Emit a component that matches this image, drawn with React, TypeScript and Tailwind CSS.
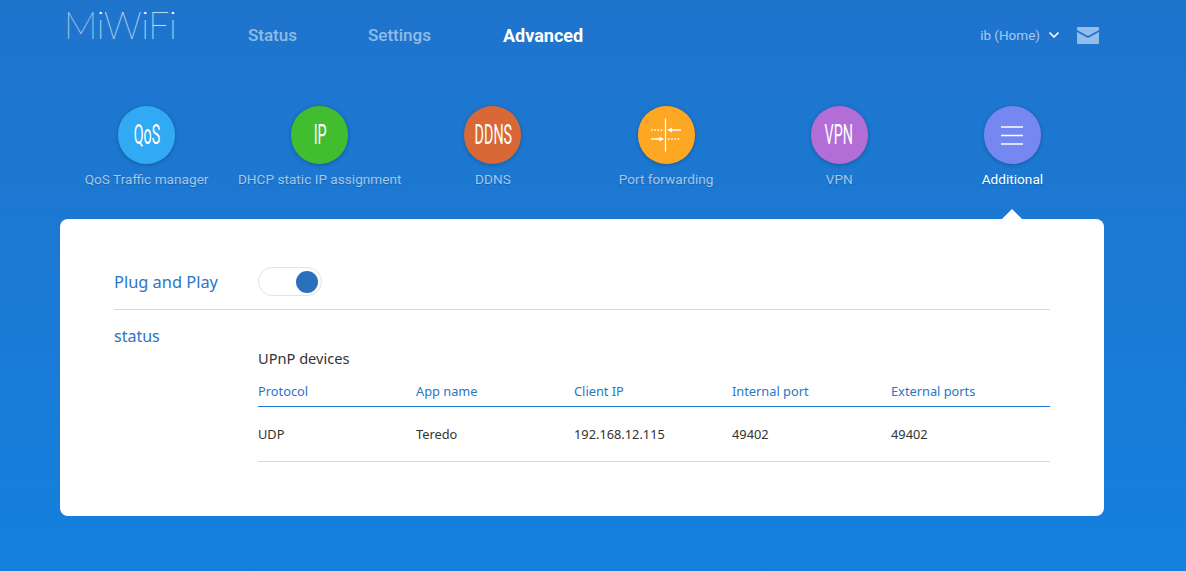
import { ChevronDown } from "lucide-react";

const tools = [
  { label: "QoS Traffic manager", color: "bg-[#31a9f3]", mark: "QoS" },
  { label: "DHCP static IP assignment", color: "bg-[#41bd2f]", mark: "IP" },
  { label: "DDNS", color: "bg-[#d96837]", mark: "DDNS" },
  { label: "Port forwarding", color: "bg-[#fea723]", mark: "port" },
  { label: "VPN", color: "bg-[#b36dd6]", mark: "VPN" },
  { label: "Additional", color: "bg-[#7587f0]", mark: "menu", active: true },
];

function PortIcon() {
  return (
    <svg width="32" height="34" viewBox="0 0 32 34" fill="none" stroke="white">
      <path d="M15.5 0.5V33.5" strokeWidth="1.3" />
      <path d="M1 12H14M18 21H30" strokeWidth="1.3" strokeDasharray="1.6 1.6" />
      <path d="M18 12H31M1 21H13" strokeWidth="1.3" />
      <path d="M17.5 12L22 9.5V14.5Z" fill="white" strokeWidth="0" />
      <path d="M14 21L9.5 18.5V23.5Z" fill="white" strokeWidth="0" />
    </svg>
  );
}

function MenuIcon() {
  return (
    <svg width="22" height="19" viewBox="0 0 22 19" stroke="white" strokeWidth="1.6">
      <path d="M0 1H22M0 9.5H22M0 18H22" />
    </svg>
  );
}

function Mark({ mark }: { mark: string }) {
  if (mark === "port") return <PortIcon />;
  if (mark === "menu") return <MenuIcon />;
  return (
    <span className="inline-block scale-x-[0.53] font-['Roboto',sans-serif] text-[27px] font-normal text-white">
      {mark}
    </span>
  );
}

export default function App() {
  return (
    <div className="h-[571px] overflow-hidden bg-gradient-to-b from-[#1f74cc] to-[#1480de] font-['Roboto',sans-serif]">
      <div className="mx-[60px] w-[1044px]">
        <div className="flex h-[70px] items-center">
          <div className="mb-[20px] ml-[4px] w-[184px] font-['Lato',sans-serif] text-[37.5px] font-thin leading-none tracking-[-0.4px] text-white [text-shadow:0_0_1px_rgba(255,255,255,0.6)]">
            MiWiFi
          </div>
          <nav className="flex pt-[1px] text-[17px] font-medium text-[#8fbbe8]">
            <span className="w-[120px]">Status</span>
            <span className="w-[135px]">Settings</span>
            <span className="text-[18px] leading-[25px] font-bold text-white">Advanced</span>
          </nav>
          <div className="ml-auto mr-[5px] flex items-center text-[13.5px] text-[#a5c8ed]">
            <span>ib (Home)</span>
            <ChevronDown className="ml-[6px] h-[16px] w-[16px] text-white" strokeWidth={2.5} />
            <svg className="ml-[15px]" width="22" height="17" viewBox="0 0 22 17">
              <path d="M1 0H21Q22 0 22 1V3L11 9L0 3V1Q0 0 1 0Z" fill="#93bdea" />
              <path d="M0 5L11 11L22 5V16Q22 17 21 17H1Q0 17 0 16Z" fill="#93bdea" />
            </svg>
          </div>
        </div>

        <div className="mt-[36px] grid w-[1039px] grid-cols-6">
          {tools.map((t) => (
            <div key={t.label} className="flex flex-col items-center">
              <div className={`flex h-[58px] w-[57px] items-center justify-center overflow-hidden rounded-full shadow-[0_1px_4px_rgba(0,0,0,0.25)] ${t.color}`}>
                <Mark mark={t.mark} />
              </div>
              <div className={`mt-[7px] whitespace-nowrap text-[13.65px] leading-[16px] [text-shadow:0_1px_1px_rgba(0,0,0,0.2)] ${t.active ? "text-white" : "text-[#a3c6ea]"}`}>
                {t.label}
              </div>
            </div>
          ))}
        </div>

        <div className="relative mt-[32px] h-[297px] rounded-lg bg-white px-[54px] font-['Noto_Sans',sans-serif]">
          <div className="absolute -top-[10px] left-[942px] h-0 w-0 border-x-[10px] border-b-[10px] border-x-transparent border-b-white" />
          <div className="flex h-[91px] items-center border-b border-[#d9d9d9] pt-[48px] pb-[13px]">
            <span className="w-[144px] pt-[1px] text-[16.4px] text-[#2a76c6]">Plug and Play</span>
            <div className="flex h-[29px] w-[64px] items-center justify-end rounded-full border border-[#e2e2e2] pr-[3px]">
              <div className="h-[22px] w-[22px] rounded-full bg-[#2a70bd]" />
            </div>
          </div>
          <div className="flex">
            <span className="mt-[14px] w-[144px] text-[16px] leading-[24px] text-[#2a76c6]">status</span>
            <div className="flex-1 pt-[38px] text-[12.8px]">
              <div className="text-[14.6px] leading-[20px] text-[#333333]">UPnP devices</div>
              <div className="mt-[14px] grid h-[25px] grid-cols-[158px_158px_158px_159px_1fr] border-b border-[#1c7ad6] text-[#2a76c6]">
                <span>Protocol</span>
                <span>App name</span>
                <span>Client IP</span>
                <span>Internal port</span>
                <span>External ports</span>
              </div>
              <div className="grid h-[55px] grid-cols-[158px_158px_158px_159px_1fr] items-center border-b border-[#d9d9d9] pt-[2px] text-[#333333]">
                <span>UDP</span>
                <span>Teredo</span>
                <span>192.168.12.115</span>
                <span>49402</span>
                <span>49402</span>
              </div>
            </div>
          </div>
        </div>
      </div>
    </div>
  );
}
